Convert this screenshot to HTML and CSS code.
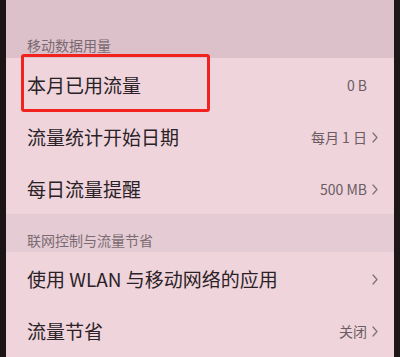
FILE: index.html
```html
<!DOCTYPE html>
<html lang="zh-CN">
<head>
<meta charset="utf-8">
<title>流量管理</title>
<link rel="stylesheet" href="styles.css">
</head>
<body>
<div class="screen">
  <div class="section-head first"><span>移动数据用量</span></div>
  <div class="row">
    <span class="title">本月已用流量</span>
    <span class="value">0 B</span>
    <svg class="chev hidden" viewBox="0 0 6 11" width="6" height="11"><path d="M1 1 L5 5.5 L1 10" /></svg>
  </div>
  <div class="row">
    <span class="title">流量统计开始日期</span>
    <span class="value">每月 1 日</span>
    <svg class="chev" viewBox="0 0 6 11" width="6" height="11"><path d="M1 1 L5 5.5 L1 10" /></svg>
  </div>
  <div class="row">
    <span class="title">每日流量提醒</span>
    <span class="value">500 MB</span>
    <svg class="chev" viewBox="0 0 6 11" width="6" height="11"><path d="M1 1 L5 5.5 L1 10" /></svg>
  </div>
  <div class="section-head second"><span>联网控制与流量节省</span></div>
  <div class="row">
    <span class="title">使用 WLAN 与移动网络的应用</span>
    <span class="value"></span>
    <svg class="chev" viewBox="0 0 6 11" width="6" height="11"><path d="M1 1 L5 5.5 L1 10" /></svg>
  </div>
  <div class="row">
    <span class="title">流量节省</span>
    <span class="value">关闭</span>
    <svg class="chev" viewBox="0 0 6 11" width="6" height="11"><path d="M1 1 L5 5.5 L1 10" /></svg>
  </div>
  <div class="highlight"></div>
</div>
</body>
</html>
```

FILE: styles.css
```css
html, body {
  margin: 0;
  padding: 0;
  background: #1b1517;
}

.screen {
  position: relative;
  width: 400px;
  height: 357px;
  box-sizing: border-box;
  border-left: 6px solid #1b1517;
  border-right: 6px solid #1d1719;
  background: #efd4dc;
  overflow: hidden;
  font-family: "Noto Sans CJK SC", "Noto Sans", sans-serif;
}

.section-head {
  box-sizing: border-box;
  padding-left: 21px;
  display: flex;
  align-items: flex-end;
  font-size: 14px;
  line-height: 20px;
  color: #7a6a71;
}

.section-head.first {
  height: 58px;
  padding-bottom: 3px;
  background: #ddc1ca;
}

.section-head.second {
  height: 38px;
  padding-bottom: 2px;
  background: #e5ccd4;
}

.row {
  box-sizing: border-box;
  height: 52px;
  padding: 2px 16px 0 21px;
  display: flex;
  align-items: center;
}

.title {
  flex: 1;
  font-size: 19px;
  line-height: 26px;
  color: #2a2226;
}

.value {
  font-size: 14px;
  line-height: 20px;
  color: #6a5c62;
}

.chev {
  margin-left: 5px;
  fill: none;
  stroke: #7d6f76;
  stroke-width: 1.2;
  stroke-linecap: round;
  stroke-linejoin: round;
}

.chev.hidden {
  visibility: hidden;
}

.highlight {
  position: absolute;
  left: 15px;
  top: 54px;
  width: 189px;
  height: 58px;
  box-sizing: border-box;
  border: 3px solid #f2221e;
  border-radius: 3px;
}
```
